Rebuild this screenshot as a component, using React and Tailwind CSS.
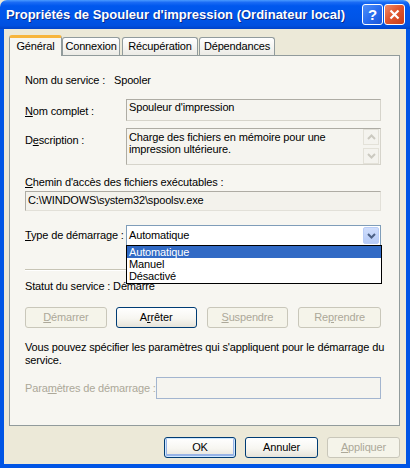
import React from "react";

const U = ({ children }) => <span className="underline underline-offset-[1px]">{children}</span>;

function XPButton({ children, disabled, def, className = "" }) {
  const base = "h-[21px] flex items-center justify-center rounded-[3px] border text-[11px] leading-none whitespace-nowrap";
  const look = disabled
    ? "border-[#c9c7ba] bg-[#f5f4ea] text-[#aca899]"
    : "border-[#003c74] bg-[linear-gradient(to_bottom,#ffffff_0%,#f7f6f1_55%,#e6e3d9_100%)] text-black";
  const d = def ? "shadow-[inset_0_0_0_1px_#cee7ff,inset_0_-1px_0_2px_#98b4e6]" : "";
  return <div className={`${base} ${look} ${d} ${className}`}>{children}</div>;
}

function Chevron({ up, color, className }) {
  return (
    <svg width="9" height="6" viewBox="0 0 9 6" className={className}>
      <path
        d={up ? "M1 5 L4.5 1.5 L8 5" : "M1 1 L4.5 4.5 L8 1"}
        fill="none"
        stroke={color}
        strokeWidth="2"
      />
    </svg>
  );
}

export default function App() {
  return (
    <div className="w-[410px] h-[468px] flex flex-col overflow-hidden bg-[#ece9d8] font-['Liberation_Sans',Arial,sans-serif] text-[11px] tracking-[-0.15px] text-black">
      {/* Title bar */}
      <div className="h-[29px] flex items-center pl-[6px] pr-[5px] gap-[1px] rounded-t-[7px] bg-[linear-gradient(to_bottom,#4a9bff_0%,#1b6cf5_8%,#0058ee_20%,#0055e8_60%,#0050e0_88%,#0042c8_100%)]">
        <div className="flex-1 whitespace-nowrap text-white font-bold text-[13px] leading-none tracking-[0px] [text-shadow:1px_1px_0_#0a2a8c]">
          Propriétés de Spouleur d'impression (Ordinateur local)
        </div>
        <div className="w-[21px] h-[21px] rounded-[3px] border border-white bg-[linear-gradient(135deg,#4f8ff7_0%,#2a6ef0_50%,#1c56d8_100%)] flex items-center justify-center text-white font-bold text-[15px] leading-none">
          ?
        </div>
        <div className="w-[21px] h-[21px] rounded-[3px] border border-white bg-[linear-gradient(135deg,#f08c6a_0%,#e1572f_45%,#c93d1a_100%)] flex items-center justify-center">
          <svg width="11" height="11" viewBox="0 0 11 11">
            <path d="M1.5 1.5 L9.5 9.5 M9.5 1.5 L1.5 9.5" stroke="#fff" strokeWidth="2.2" />
          </svg>
        </div>
      </div>

      {/* Body */}
      <div className="flex-1 flex flex-col border-x-4 border-b-4 border-[#0055e5] bg-[#ece9d8] pl-[5px] pr-[6px] pt-[6px] pb-[6px]">
        {/* Tabs */}
        <div className="h-[20px] flex items-end relative z-10 whitespace-nowrap">
          <div className="w-[53px] h-[21px] -mb-[1px] rounded-t-[3px] border-x border-[#919b9c] border-t-[3px] border-t-[#f7b53c] bg-[#f7f6f1] flex items-center justify-center pb-[2px]">
            Général
          </div>
          <div className="w-[58px] h-[18px] rounded-t-[3px] border-x border-t border-[#919b9c] bg-[linear-gradient(to_bottom,#ffffff,#ecebe6)] flex items-center justify-center">
            Connexion
          </div>
          <div className="w-[76px] h-[18px] ml-[2px] rounded-t-[3px] border-x border-t border-[#919b9c] bg-[linear-gradient(to_bottom,#ffffff,#ecebe6)] flex items-center justify-center">
            Récupération
          </div>
          <div className="w-[76px] h-[18px] ml-[1px] rounded-t-[3px] border-x border-t border-[#919b9c] bg-[linear-gradient(to_bottom,#ffffff,#ecebe6)] flex items-center justify-center">
            Dépendances
          </div>
        </div>

        {/* Panel */}
        <div className="relative h-[371px] border border-[#919b9c] bg-[#f7f6f1] pl-[15px] pr-[18px] flex flex-col leading-[13px]">
          <div className="mt-[18px] h-[13px] flex whitespace-nowrap">
            <div className="w-[89px]">Nom du service :</div>
            <div>Spooler</div>
          </div>

          <div className="mt-[12px] flex">
            <div className="w-[101px] pt-[6px] whitespace-nowrap">
              <U>N</U>om complet :
            </div>
            <div className="flex-1 h-[22px] border border-[#aeaca4] border-r-[#d6d4cb] border-b-[#d6d4cb] bg-[#f5f4ef] pl-[2px] pt-[1px] whitespace-nowrap">
              Spouleur d'impression
            </div>
          </div>

          <div className="mt-[7px] flex">
            <div className="w-[101px] pt-[6px] whitespace-nowrap">
              D<U>e</U>scription :
            </div>
            <div className="flex-1 h-[37px] border border-[#aeaca4] border-r-[#d6d4cb] border-b-[#d6d4cb] bg-[#f5f4ef] flex">
              <div className="flex-1 pl-[2px] pt-[2px] leading-[12px] whitespace-nowrap">
                Charge des fichiers en mémoire pour une
                <br />
                impression ultérieure.
              </div>
              <div className="w-[17px] flex flex-col justify-between pr-[1px]">
                <div className="h-[16px] border border-[#e3e1d8] bg-[#f4f3ee] flex items-center justify-center">
                  <Chevron up color="#cbc9c0" />
                </div>
                <div className="h-[16px] border border-[#e3e1d8] bg-[#f4f3ee] flex items-center justify-center">
                  <Chevron color="#cbc9c0" />
                </div>
              </div>
            </div>
          </div>

          <div className="mt-[11px] h-[13px] whitespace-nowrap">
            <U>C</U>hemin d'accès des fichiers exécutables :
          </div>
          <div className="mt-[2px] h-[20px] border border-[#aeaca4] border-r-[#e2e0d8] border-b-[#e2e0d8] bg-[#f3f2ec] pl-[2px] pt-[2px] whitespace-nowrap">
            C:\WINDOWS\system32\spoolsv.exe
          </div>

          <div className="mt-[14px] flex">
            <div className="w-[101px] pt-[4px] whitespace-nowrap">
              <U>T</U>ype de démarrage :
            </div>
            <div className="flex-1 h-[21px] border border-[#7f9db9] bg-white flex items-center pl-[2px] pr-[1px]">
              <div className="flex-1">Automatique</div>
              <div className="w-[16px] h-[17px] rounded-[2px] bg-[linear-gradient(to_bottom,#d0defc,#b6cbf7)] border border-[#b9cdf7] flex items-center justify-center">
                <Chevron color="#4d6185" />
              </div>
            </div>
          </div>

          <div className="mt-[23px] h-[2px] border-t border-[#c7c4b5] border-b border-b-white" />

          <div className="mt-[9px] h-[13px] whitespace-nowrap">Statut du service : Démarré</div>

          <div className="mt-[14px] flex gap-[9px]">
            <XPButton disabled className="w-[83px]">
              <span><U>D</U>émarrer</span>
            </XPButton>
            <XPButton className="w-[82px]">
              <span>A<U>r</U>rêter</span>
            </XPButton>
            <XPButton disabled className="w-[83px] ml-[1px]">
              <span><U>S</U>uspendre</span>
            </XPButton>
            <XPButton disabled className="w-[84px] ml-[1px]">
              <span>Re<U>p</U>rendre</span>
            </XPButton>
          </div>

          <div className="mt-[13px] leading-[13px] whitespace-nowrap">
            Vous pouvez spécifier les paramètres qui s'appliquent pour le démarrage du
            <br />
            service.
          </div>

          <div className="mt-[10px] flex">
            <div className="w-[131px] pt-[5px] text-[#aca899] whitespace-nowrap">
              Para<U>m</U>ètres de démarrage :
            </div>
            <div className="flex-1 h-[22px] border border-[#a3b5cf] bg-[#f5f4ef]" />
          </div>

          {/* Dropdown list overlay */}
          <div className="absolute left-[116px] top-[189px] w-[256px] border border-black bg-white flex flex-col whitespace-nowrap">
            <div className="h-[12px] bg-[#316ac5] text-white pl-[2px] leading-[12px]">Automatique</div>
            <div className="h-[12px] pl-[2px] leading-[12px]">Manuel</div>
            <div className="h-[13px] pl-[2px] leading-[12px]">Désactivé</div>
          </div>
        </div>

        {/* Dialog buttons */}
        <div className="mt-[11px] flex justify-end gap-[9px]">
          <XPButton def className="w-[72px]">OK</XPButton>
          <XPButton className="w-[73px]">Annuler</XPButton>
          <XPButton disabled className="w-[73px]">
            <span><U>A</U>ppliquer</span>
          </XPButton>
        </div>
      </div>
    </div>
  );
}
